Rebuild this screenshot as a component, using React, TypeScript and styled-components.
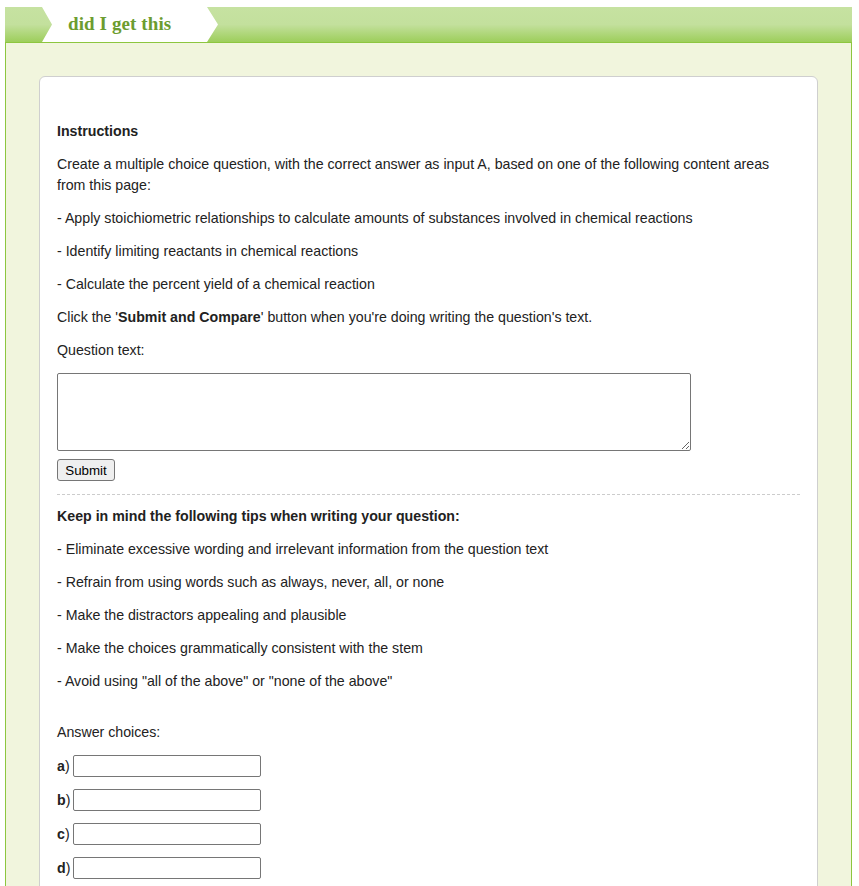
import React from "react";
import styled, { createGlobalStyle } from "styled-components";

const Global = createGlobalStyle`
  html, body { margin: 0; padding: 0; background: #fff; }
  body { padding: 7px 7px 0 5px; font-family: "Liberation Sans", Arial, sans-serif; color: #222; }
`;

const Header = styled.div`
  display: flex;
  align-items: stretch;
  height: 35px;
  background: linear-gradient(to bottom, #c6e2a1 0%, #c3e09d 50%, #9dce5b 100%);
  border-bottom: 1px solid #8dc63f;
`;

const Tab = styled.div`
  margin-left: 37px;
  width: 176px;
  background: #fff;
  clip-path: polygon(0 0, 165px 0, 176px 50%, 165px 100%, 0 100%, 10px 50%);
  display: flex;
  align-items: center;
  padding: 0 0 2px 26px;
  box-sizing: border-box;
`;

const Title = styled.h1`
  margin: 0;
  font-family: "Liberation Serif", "DejaVu Serif", Georgia, serif;
  font-weight: bold;
  font-size: 19px;
  color: #6c9c2f;
  letter-spacing: 0.1px;
`;

const Frame = styled.div`
  background: #f1f5dd;
  border-left: 1px solid #8dc63f;
  border-right: 1px solid #8dc63f;
  padding: 33px 33px 0 33px;
  min-height: 900px;
`;

const Card = styled.div`
  background: #fff;
  border: 1px solid #cfcfcf;
  border-radius: 6px 6px 0 0;
  padding: 32px 17px 40px;
  font-size: 14.2px;
  line-height: 21px;
`;

const P = styled.p<{ $gap?: number }>`
  margin: ${(p) => (p.$gap ? `${p.$gap}px` : "12px")} 0 12px;
`;

const Heading = styled(P)`
  font-weight: bold;
`;

const TextArea = styled.textarea`
  display: block;
  box-sizing: border-box;
  width: 634px;
  height: 78px;
  margin: 0;
  border: 1px solid #767676;
  border-radius: 2px;
  font-family: "Liberation Mono", monospace;
  font-size: 13px;
`;

const Button = styled.button`
  display: block;
  margin-top: 8px;
  box-sizing: border-box;
  height: 22px;
  width: 58px;
  padding: 0;
  font-family: "Liberation Sans", Arial, sans-serif;
  font-size: 13.33px;
  color: #000;
  background: #efefef;
  border: 1px solid #767676;
  border-radius: 3px;
`;

const Divider = styled.hr`
  border: none;
  border-top: 1px dashed #cccccc;
  margin: 13px 0 -1px;
`;

const Choices = styled.div`
  display: grid;
  gap: 12px;
  margin-top: 11px;
`;

const ChoiceRow = styled.label`
  display: flex;
  align-items: center;
  height: 22px;
  gap: 3px;
`;

const Letter = styled.span`
  font-weight: bold;
`;

const ChoiceInput = styled.input`
  box-sizing: border-box;
  width: 188px;
  height: 22px;
  margin: 0;
  border: 1px solid #767676;
  border-radius: 2px;
`;

const tips = [
  "- Eliminate excessive wording and irrelevant information from the question text",
  "- Refrain from using words such as always, never, all, or none",
  "- Make the distractors appealing and plausible",
  "- Make the choices grammatically consistent with the stem",
  '- Avoid using "all of the above" or "none of the above"',
];

export default function App() {
  return (
    <>
      <Global />
      <Header>
        <Tab>
          <Title>did I get this</Title>
        </Tab>
      </Header>
      <Frame>
        <Card>
          <Heading>Instructions</Heading>
          <P>
            Create a multiple choice question, with the correct answer as input A, based on one of the following content areas from this page:
          </P>
          <P>- Apply stoichiometric relationships to calculate amounts of substances involved in chemical reactions</P>
          <P>- Identify limiting reactants in chemical reactions</P>
          <P>- Calculate the percent yield of a chemical reaction</P>
          <P>
            Click the '<b>Submit and Compare</b>' button when you're doing writing the question's text.
          </P>
          <P>Question text:</P>
          <TextArea />
          <Button>Submit</Button>
          <Divider />
          <Heading>Keep in mind the following tips when writing your question:</Heading>
          {tips.map((t) => (
            <P key={t}>{t}</P>
          ))}
          <P $gap={30}>Answer choices:</P>
          <Choices>
            {["a", "b", "c", "d"].map((l) => (
              <ChoiceRow key={l}>
                <span>
                  <Letter>{l}</Letter>)
                </span>
                <ChoiceInput />
              </ChoiceRow>
            ))}
          </Choices>
        </Card>
      </Frame>
    </>
  );
}
